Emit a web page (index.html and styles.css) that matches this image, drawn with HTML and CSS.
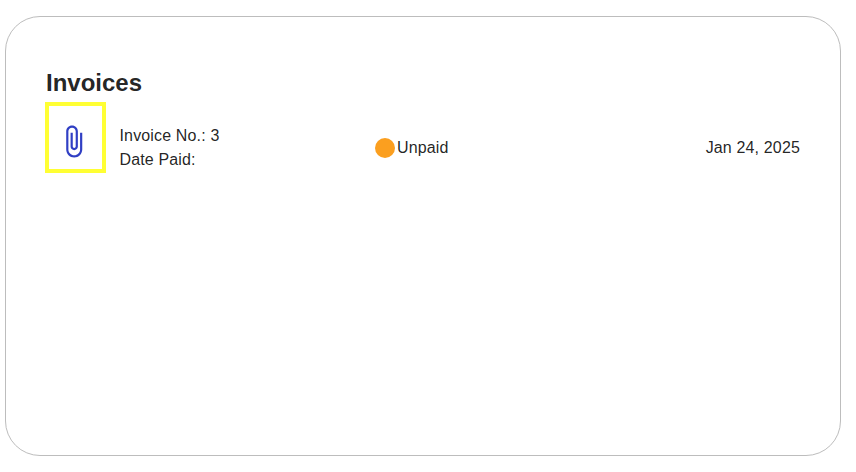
FILE: index.html
```html
<!DOCTYPE html>
<html lang="en">
<head>
    <meta charset="UTF-8">
    <meta name="viewport" content="width=device-width, initial-scale=1.0">
    <title>Invoices</title>
    <link rel="stylesheet" href="styles.css">
</head>
<body>
    <div class="card">
        <h2 class="title">Invoices</h2>
        <div class="invoice">
            <button class="attachment" aria-label="Open attachment">
                <svg class="clip" viewBox="0 0 24 24">
                    <path d="M16.5 6v11.5c0 2.21-1.79 4-4 4s-4-1.79-4-4V5c0-1.38 1.12-2.5 2.5-2.5s2.5 1.12 2.5 2.5v10.5c0 .55-.45 1-1 1s-1-.45-1-1V6H10v9.5c0 1.38 1.12 2.5 2.5 2.5s2.5-1.12 2.5-2.5V5c0-2.21-1.79-4-4-4S7 2.79 7 5v12.5c0 3.04 2.46 5.5 5.5 5.5s5.5-2.46 5.5-5.5V6z"/>
                </svg>
            </button>
            <div class="details">
                <div>Invoice No.: 3</div>
                <div>Date Paid:</div>
            </div>
            <div class="status"><span class="dot"></span>Unpaid</div>
            <div class="date">Jan 24, 2025</div>
        </div>
    </div>
</body>
</html>
```
FILE: styles.css
```css
*{
    box-sizing: border-box;
}
body{
    margin: 0;
    padding: 16px 15px 0 5px;
    background-color: white;
    color: rgba(0, 0, 0, 0.87);
    font-family: "Liberation Sans", Arial, sans-serif;
    font-size: 16px;
    line-height: 24px;
}
.card{
    height: 440px;
    padding: 50px 40px 0;
    border: 1px solid #bdbdbd;
    border-radius: 35px;
}
.title{
    margin: 0;
    font-size: 24px;
    font-weight: bold;
    line-height: 32px;
}
.invoice{
    display: flex;
    align-items: center;
    margin-top: 3px;
    margin-left: -1px;
    letter-spacing: 0.15px;
}
.attachment{
    display: flex;
    align-items: center;
    justify-content: center;
    width: 61px;
    height: 71px;
    padding: 8px 4px 0 0;
    border: 4px solid #ffff33;
    background: none;
    cursor: pointer;
}
.clip{
    width: 35px;
    height: 35px;
    flex-shrink: 0;
    fill: #303fc4;
}
.details{
    width: 255.5px;
    margin-left: 13.5px;
    padding-top: 20px;
}
.status{
    display: flex;
    align-items: center;
    gap: 2px;
    padding-top: 20px;
}
.dot{
    width: 20px;
    height: 20px;
    border-radius: 50%;
    background-color: #fb9f1f;
}
.date{
    margin-left: auto;
    padding-top: 20px;
}
```
